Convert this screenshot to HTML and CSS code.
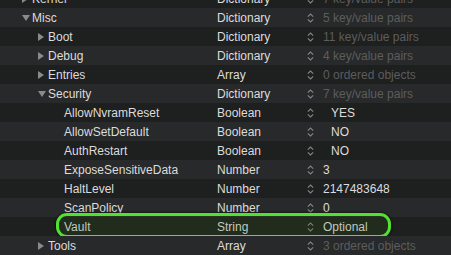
FILE: index.html
```html
<!DOCTYPE html>
<html lang="en">
<head>
  <meta charset="UTF-8">
  <title>config.plist</title>
  <link rel="stylesheet" href="styles.css">
</head>
<body>
  <div class="outline">
    <div class="row light">
      <div class="key lvl1"><span class="disc"><svg width="6" height="8" viewBox="0 0 6 8"><path d="M0 0 L6 4 L0 8 Z"/></svg></span>Kernel</div>
      <div class="type">Dictionary</div>
      <div class="value"><span class="step"><svg width="7" height="10" viewBox="0 0 7 10"><path d="M0.8 3.6 L3.5 1 L6.2 3.6 M0.8 6.4 L3.5 9 L6.2 6.4"/></svg></span><span class="dim">7 key/value pairs</span></div>
    </div>
    <div class="row dark">
      <div class="key lvl1"><span class="disc"><svg width="8" height="6" viewBox="0 0 8 6"><path d="M0 0 L8 0 L4 6 Z"/></svg></span>Misc</div>
      <div class="type">Dictionary</div>
      <div class="value"><span class="step"><svg width="7" height="10" viewBox="0 0 7 10"><path d="M0.8 3.6 L3.5 1 L6.2 3.6 M0.8 6.4 L3.5 9 L6.2 6.4"/></svg></span><span class="dim">5 key/value pairs</span></div>
    </div>
    <div class="row light">
      <div class="key lvl2"><span class="disc"><svg width="6" height="8" viewBox="0 0 6 8"><path d="M0 0 L6 4 L0 8 Z"/></svg></span>Boot</div>
      <div class="type">Dictionary</div>
      <div class="value"><span class="step"><svg width="7" height="10" viewBox="0 0 7 10"><path d="M0.8 3.6 L3.5 1 L6.2 3.6 M0.8 6.4 L3.5 9 L6.2 6.4"/></svg></span><span class="dim">11 key/value pairs</span></div>
    </div>
    <div class="row dark">
      <div class="key lvl2"><span class="disc"><svg width="6" height="8" viewBox="0 0 6 8"><path d="M0 0 L6 4 L0 8 Z"/></svg></span>Debug</div>
      <div class="type">Dictionary</div>
      <div class="value"><span class="step"><svg width="7" height="10" viewBox="0 0 7 10"><path d="M0.8 3.6 L3.5 1 L6.2 3.6 M0.8 6.4 L3.5 9 L6.2 6.4"/></svg></span><span class="dim">4 key/value pairs</span></div>
    </div>
    <div class="row light">
      <div class="key lvl2"><span class="disc"><svg width="6" height="8" viewBox="0 0 6 8"><path d="M0 0 L6 4 L0 8 Z"/></svg></span>Entries</div>
      <div class="type">Array</div>
      <div class="value"><span class="step"><svg width="7" height="10" viewBox="0 0 7 10"><path d="M0.8 3.6 L3.5 1 L6.2 3.6 M0.8 6.4 L3.5 9 L6.2 6.4"/></svg></span><span class="dim">0 ordered objects</span></div>
    </div>
    <div class="row dark">
      <div class="key lvl2"><span class="disc"><svg width="8" height="6" viewBox="0 0 8 6"><path d="M0 0 L8 0 L4 6 Z"/></svg></span>Security</div>
      <div class="type">Dictionary</div>
      <div class="value"><span class="step"><svg width="7" height="10" viewBox="0 0 7 10"><path d="M0.8 3.6 L3.5 1 L6.2 3.6 M0.8 6.4 L3.5 9 L6.2 6.4"/></svg></span><span class="dim">7 key/value pairs</span></div>
    </div>
    <div class="row light">
      <div class="key lvl3"><span class="disc"></span>AllowNvramReset</div>
      <div class="type">Boolean</div>
      <div class="value"><span class="step"><svg width="7" height="10" viewBox="0 0 7 10"><path d="M0.8 3.6 L3.5 1 L6.2 3.6 M0.8 6.4 L3.5 9 L6.2 6.4"/></svg></span><span class="bool">YES</span></div>
    </div>
    <div class="row dark">
      <div class="key lvl3"><span class="disc"></span>AllowSetDefault</div>
      <div class="type">Boolean</div>
      <div class="value"><span class="step"><svg width="7" height="10" viewBox="0 0 7 10"><path d="M0.8 3.6 L3.5 1 L6.2 3.6 M0.8 6.4 L3.5 9 L6.2 6.4"/></svg></span><span class="bool">NO</span></div>
    </div>
    <div class="row light">
      <div class="key lvl3"><span class="disc"></span>AuthRestart</div>
      <div class="type">Boolean</div>
      <div class="value"><span class="step"><svg width="7" height="10" viewBox="0 0 7 10"><path d="M0.8 3.6 L3.5 1 L6.2 3.6 M0.8 6.4 L3.5 9 L6.2 6.4"/></svg></span><span class="bool">NO</span></div>
    </div>
    <div class="row dark">
      <div class="key lvl3"><span class="disc"></span>ExposeSensitiveData</div>
      <div class="type">Number</div>
      <div class="value"><span class="step"><svg width="7" height="10" viewBox="0 0 7 10"><path d="M0.8 3.6 L3.5 1 L6.2 3.6 M0.8 6.4 L3.5 9 L6.2 6.4"/></svg></span>3</div>
    </div>
    <div class="row light">
      <div class="key lvl3"><span class="disc"></span>HaltLevel</div>
      <div class="type">Number</div>
      <div class="value"><span class="step"><svg width="7" height="10" viewBox="0 0 7 10"><path d="M0.8 3.6 L3.5 1 L6.2 3.6 M0.8 6.4 L3.5 9 L6.2 6.4"/></svg></span>2147483648</div>
    </div>
    <div class="row dark">
      <div class="key lvl3"><span class="disc"></span>ScanPolicy</div>
      <div class="type">Number</div>
      <div class="value"><span class="step"><svg width="7" height="10" viewBox="0 0 7 10"><path d="M0.8 3.6 L3.5 1 L6.2 3.6 M0.8 6.4 L3.5 9 L6.2 6.4"/></svg></span>0</div>
    </div>
    <div class="row light marked">
      <div class="key lvl3"><span class="disc"></span>Vault</div>
      <div class="type">String</div>
      <div class="value"><span class="step"><svg width="7" height="10" viewBox="0 0 7 10"><path d="M0.8 3.6 L3.5 1 L6.2 3.6 M0.8 6.4 L3.5 9 L6.2 6.4"/></svg></span>Optional</div>
      <div class="ring"></div>
    </div>
    <div class="row dark">
      <div class="key lvl2"><span class="disc"><svg width="6" height="8" viewBox="0 0 6 8"><path d="M0 0 L6 4 L0 8 Z"/></svg></span>Tools</div>
      <div class="type">Array</div>
      <div class="value"><span class="step"><svg width="7" height="10" viewBox="0 0 7 10"><path d="M0.8 3.6 L3.5 1 L6.2 3.6 M0.8 6.4 L3.5 9 L6.2 6.4"/></svg></span><span class="dim">3 ordered objects</span></div>
    </div>
  </div>
</body>
</html>
```

FILE: styles.css
```css
body {
  margin: 0;
  padding: 0;
  background-color: #1e1f1f;
  font-family: "Liberation Sans", Arial, sans-serif;
  font-size: 12px;
  color: #dcdcdc;
  overflow: hidden;
}

.outline {
  margin-top: -11px;
}

.row {
  position: relative;
  display: grid;
  grid-template-columns: 217px 90px 1fr;
  height: 19px;
  align-items: center;
}

.row.light { background: #1e1f1f; }
.row.dark { background: #28292a; }

.key {
  display: flex;
  align-items: center;
  white-space: nowrap;
}

.lvl1 { padding-left: 22px; }
.lvl2 { padding-left: 38px; }
.lvl3 { padding-left: 54px; }

.disc {
  width: 10px;
  height: 19px;
  display: flex;
  align-items: center;
  flex: none;
}

.disc svg { fill: #8a8a8a; }

.type {
  white-space: nowrap;
}

.value {
  display: flex;
  align-items: center;
  white-space: nowrap;
}

.step {
  width: 16px;
  height: 19px;
  display: flex;
  align-items: center;
  flex: none;
}

.step svg {
  fill: none;
  stroke: #858585;
  stroke-width: 1.1;
}

.dim { color: #5c5d5d; }

.bool { padding-left: 8px; }

/* annotation ring round the Vault row */
.ring {
  position: absolute;
  left: 56px;
  top: -4px;
  width: 329px;
  height: 19px;
  border: 3px solid #52e032;
  border-radius: 11px;
  background: rgba(50, 110, 20, 0.16);
  box-shadow: 0 0 3px rgba(0, 0, 0, 0.9);
}
```
